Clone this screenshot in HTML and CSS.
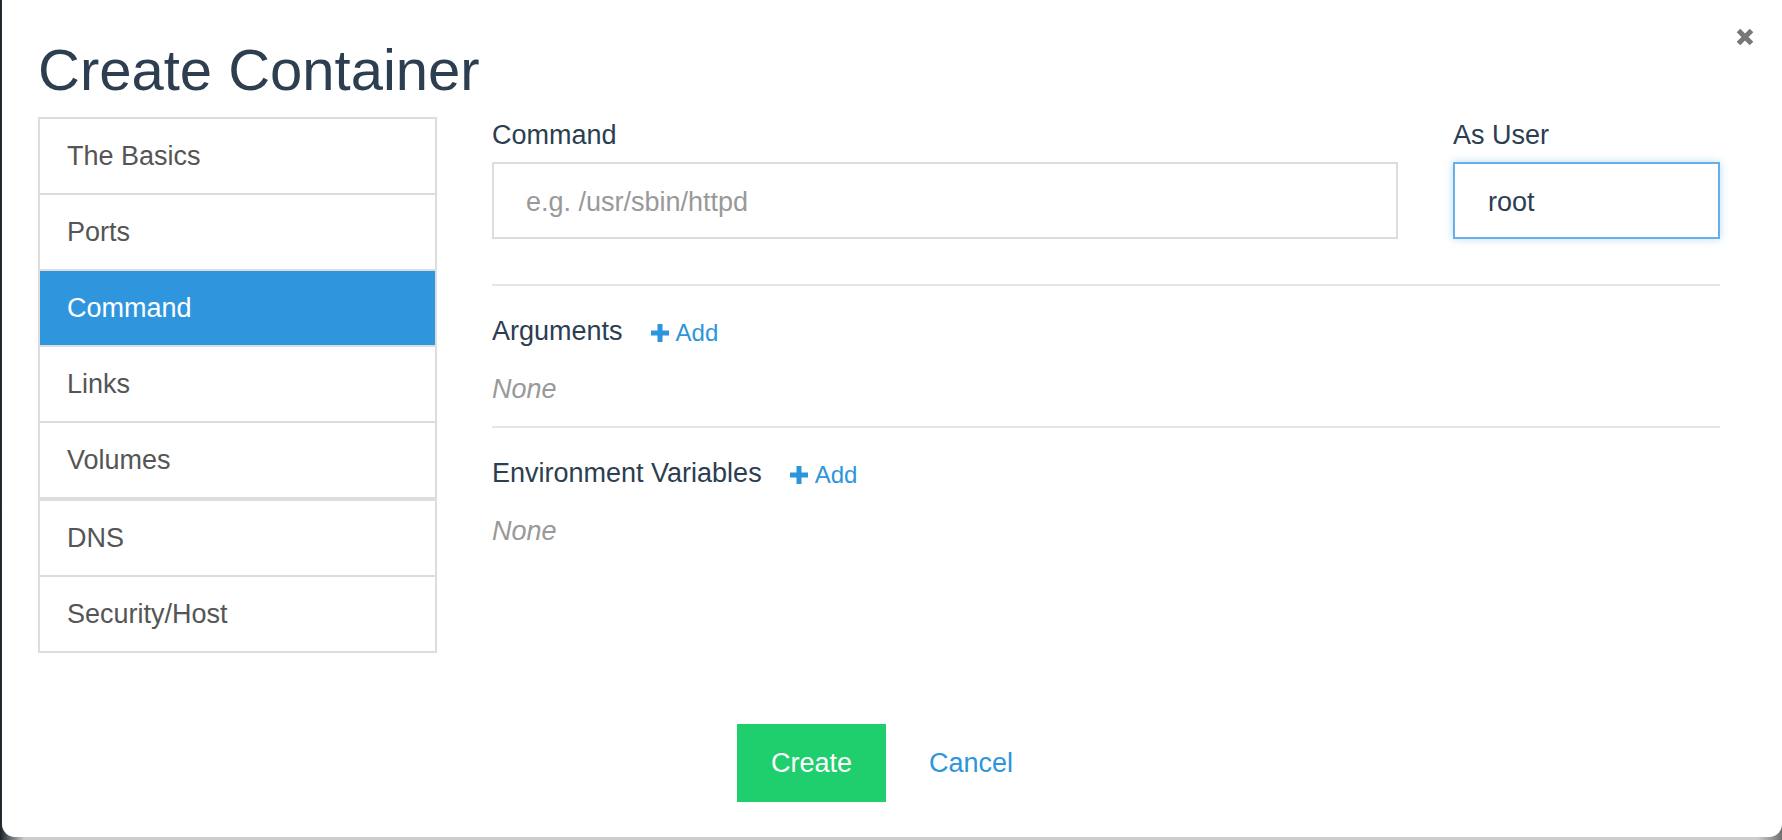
FILE: index.html
```html
<!DOCTYPE html>
<html>
<head>
<meta charset="utf-8">
<title>Create Container</title>
<link rel="stylesheet" href="styles.css">
</head>
<body>
<div class="frame">
  <div class="modal">
    <button class="close" aria-label="Close">
      <svg width="18" height="18" viewBox="0 0 18 18"><path d="M2.5 2.5 L15.5 15.5 M15.5 2.5 L2.5 15.5" stroke="#777" stroke-width="5" stroke-linecap="butt"/></svg>
    </button>
    <h1 class="title">Create Container</h1>
    <div class="body">
      <ul class="nav">
        <li class="nav-item">The Basics</li>
        <li class="nav-item">Ports</li>
        <li class="nav-item active">Command</li>
        <li class="nav-item">Links</li>
        <li class="nav-item">Volumes</li>
        <li class="nav-item group-start">DNS</li>
        <li class="nav-item">Security/Host</li>
      </ul>
      <div class="content">
        <div class="row">
          <div class="field field-command">
            <label class="label">Command</label>
            <input class="input" type="text" placeholder="e.g. /usr/sbin/httpd">
          </div>
          <div class="field field-user">
            <label class="label">As User</label>
            <input class="input focus" type="text" value="root">
          </div>
        </div>
        <div class="section">
          <div class="section-head">
            <span class="section-title">Arguments</span>
            <a class="add"><svg class="plus" width="18" height="18" viewBox="0 0 18 18"><rect x="0" y="6.5" width="18" height="5" fill="#2d95dc"/><rect x="6.5" y="0" width="5" height="18" fill="#2d95dc"/></svg>Add</a>
          </div>
          <div class="none">None</div>
        </div>
        <div class="section">
          <div class="section-head">
            <span class="section-title">Environment Variables</span>
            <a class="add"><svg class="plus" width="18" height="18" viewBox="0 0 18 18"><rect x="0" y="6.5" width="18" height="5" fill="#2d95dc"/><rect x="6.5" y="0" width="5" height="18" fill="#2d95dc"/></svg>Add</a>
          </div>
          <div class="none">None</div>
        </div>
      </div>
    </div>
    <div class="footer">
      <button class="btn btn-create">Create</button>
      <button class="btn btn-cancel">Cancel</button>
    </div>
  </div>
</div>
</body>
</html>
```

FILE: styles.css
```css
* { box-sizing: border-box; }
html, body { margin: 0; padding: 0; }
body {
  font-family: "Liberation Sans", Arial, Helvetica, sans-serif;
  color: #2c3e50;
  background: #cccccc;
}
.frame {
  width: 1782px;
  height: 840px;
  padding: 0 0 3px 2px;
  background: linear-gradient(to right, #1c2329 0px, #cccccc 24px, #cccccc calc(100% - 24px), #6f6f6f 100%);
  overflow: hidden;
}
.modal {
  position: relative;
  height: 837px;
  background: #ffffff;
  border-radius: 0 0 13px 13px;
  padding: 0 62px 0 36px;
  display: flex;
  flex-direction: column;
}
.close {
  position: absolute;
  top: 28px;
  right: 28px;
  width: 18px;
  height: 18px;
  padding: 0;
  border: 0;
  background: transparent;
  line-height: 0;
}
.title {
  margin: 40px 0 17px 0;
  font-size: 58px;
  line-height: 60px;
  font-weight: normal;
  color: #2c3e50;
}
.body {
  display: flex;
  gap: 55px;
  align-items: flex-start;
}
.nav {
  list-style: none;
  margin: 0;
  padding: 0;
  width: 399px;
  flex: none;
  border: 2px solid #dddddd;
}
.nav-item {
  height: 76px;
  line-height: 74px;
  padding-left: 27px;
  font-size: 27px;
  color: #555555;
  border-top: 2px solid #dddddd;
}
.nav-item:first-child { border-top: 0; height: 74px; }
.nav-item.group-start { border-top-width: 4px; height: 78px; }
.nav-item.active {
  background: #2f96de;
  color: #ffffff;
}
.content {
  flex: 1;
  min-width: 0;
}
.row {
  display: flex;
  gap: 55px;
  padding-bottom: 45px;
  border-bottom: 2px solid #e6e6e6;
}
.field { display: flex; flex-direction: column; }
.field-command { flex: 1; }
.field-user { width: 267px; flex: none; }
.label {
  display: block;
  font-size: 27px;
  line-height: 36px;
  margin-bottom: 9px;
  color: #2c3e50;
}
.input {
  height: 77px;
  border: 2px solid #dddddd;
  padding: 4px 32px 0 32px;
  font-family: "Liberation Sans", Arial, sans-serif;
  font-size: 27px;
  color: #2c3e50;
  outline: none;
  background: #fff;
}
.input::placeholder { color: #999999; }
.input.focus {
  border-color: #66afe9;
  box-shadow: 0 0 8px rgba(102, 175, 233, 0.45);
  padding-left: 33px;
}
.section {
  padding-top: 27px;
  padding-bottom: 19px;
}
.section + .section { border-top: 2px solid #e6e6e6; }
.section-head {
  display: flex;
  align-items: center;
  gap: 28px;
  height: 36px;
}
.section-title {
  font-size: 27px;
  line-height: 36px;
  color: #2c3e50;
}
.add {
  display: flex;
  align-items: center;
  gap: 7px;
  font-size: 24px;
  line-height: 36px;
  color: #2d95dc;
  padding-top: 3px;
}
.plus { display: block; }
.none {
  margin-top: 22px;
  font-size: 27px;
  line-height: 36px;
  font-style: italic;
  color: #999999;
}
.footer {
  margin-top: auto;
  padding-bottom: 35px;
  display: flex;
  justify-content: center;
  gap: 9px;
  margin-left: -34px;
  margin-right: -60px;
}
.btn {
  height: 78px;
  padding: 0 34px;
  border: 0;
  font-family: "Liberation Sans", Arial, sans-serif;
  font-size: 27px;
  cursor: pointer;
}
.btn-create {
  background: #1fce6d;
  color: #ffffff;
}
.btn-cancel {
  background: transparent;
  color: #2d95dc;
}
```
